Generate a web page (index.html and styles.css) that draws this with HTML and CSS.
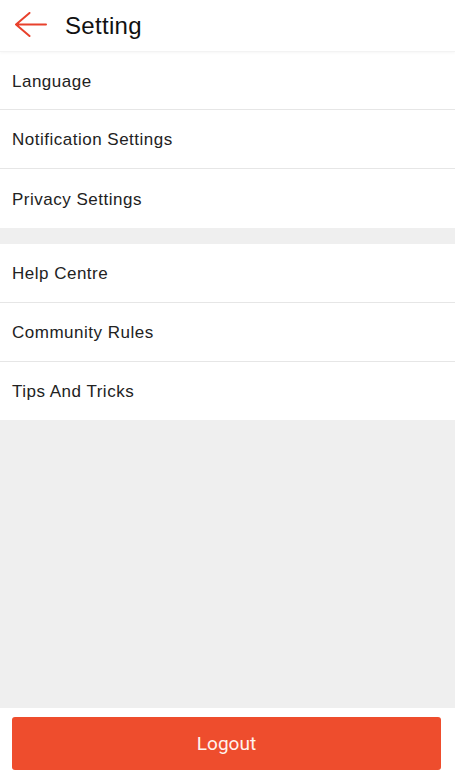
FILE: index.html
```html
<!DOCTYPE html>
<html lang="en">
<head>
<meta charset="utf-8">
<title>Setting</title>
<link rel="stylesheet" href="styles.css">
</head>
<body>
<div class="app">
  <header class="topbar">
    <button class="back" aria-label="Back">
      <svg width="34" height="26" viewBox="0 0 34 26" aria-hidden="true">
        <path d="M32 12.5 H2 M15.5 1 L2 12.5 L15.5 24" fill="none" stroke="#e8412c" stroke-width="2" stroke-linecap="round" stroke-linejoin="round"/>
      </svg>
    </button>
    <h1 class="title">Setting</h1>
  </header>
  <ul class="group">
    <li class="row">Language</li>
    <li class="row">Notification Settings</li>
    <li class="row">Privacy Settings</li>
  </ul>
  <ul class="group group-spaced">
    <li class="row">Help Centre</li>
    <li class="row">Community Rules</li>
    <li class="row">Tips And Tricks</li>
  </ul>
  <div class="filler"></div>
  <footer class="footer">
    <button class="logout">Logout</button>
  </footer>
</div>
</body>
</html>
```
FILE: styles.css
```css
* { box-sizing: border-box; }
html, body { margin: 0; padding: 0; }
body {
  font-family: "Liberation Sans", Arial, sans-serif;
  color: #222;
  background: #efefef;
}
.app {
  display: flex;
  flex-direction: column;
  height: 774px;
}
.topbar {
  height: 52px;
  background: #fff;
  display: flex;
  align-items: center;
  padding-left: 14px;
  border-bottom: 1px solid #f3f3f3;
  box-shadow: 0 1px 3px rgba(0,0,0,0.04);
  position: relative;
  z-index: 1;
}
.back {
  border: 0;
  background: none;
  padding: 0;
  margin: 0 0 1px;
  width: 34px;
  height: 26px;
  display: flex;
}
.title {
  margin: 0 0 0 17px;
  font-size: 24px;
  letter-spacing: 0.3px;
  font-weight: 400;
  color: #111;
}
.group {
  list-style: none;
  margin: 0;
  padding: 0;
  background: #fff;
}
.group-spaced { margin-top: 16px; }
.row {
  height: 59px;
  display: flex;
  align-items: center;
  padding: 2px 0 0 12px;
  font-size: 17px;
  letter-spacing: 0.5px;
  color: #222;
  border-bottom: 1px solid #e6e6e6;
}
.topbar + .group .row:first-child { height: 58px; }
.row:last-child { border-bottom: 0; }
.group-spaced .row:last-child { height: 58px; }
.filler { flex: 1; }
.footer {
  background: #fff;
  padding: 9px 14px 4px 12px;
}
.logout {
  display: block;
  width: 100%;
  height: 53px;
  border: 0;
  border-radius: 3px;
  background: #ee4d2d;
  color: #fff3ee;
  font-family: Roboto, "Liberation Sans", sans-serif;
  font-size: 19px;
}
```
